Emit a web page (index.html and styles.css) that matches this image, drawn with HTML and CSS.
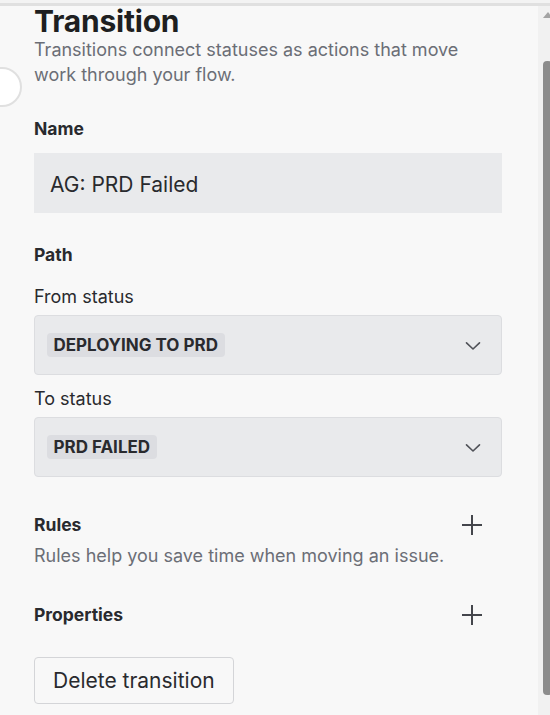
FILE: index.html
```html
<!DOCTYPE html>
<html lang="en">
<head>
<meta charset="utf-8">
<title>Transition</title>
<link rel="stylesheet" href="styles.css">
</head>
<body>
<div class="frame">
  <div class="topline"></div>
  <div class="row">
    <main class="panel">
      <h1 class="title">Transition</h1>
      <p class="subtitle">Transitions connect statuses as actions that move work through your flow.</p>

      <section class="field field-name">
        <h2 class="label">Name</h2>
        <div class="text-input">AG: PRD Failed</div>
      </section>

      <section class="field field-path">
        <h2 class="label">Path</h2>
        <div class="sublabel">From status</div>
        <div class="select">
          <span class="lozenge">DEPLOYING TO PRD</span>
          <svg class="chevron" width="16" height="10" viewBox="0 0 16 10"><path d="M1.5 1.8 L8 8 L14.5 1.8" fill="none" stroke="#505258" stroke-width="1.6" stroke-linecap="round" stroke-linejoin="round"/></svg>
        </div>
        <div class="sublabel sublabel-to">To status</div>
        <div class="select">
          <span class="lozenge">PRD FAILED</span>
          <svg class="chevron" width="16" height="10" viewBox="0 0 16 10"><path d="M1.5 1.8 L8 8 L14.5 1.8" fill="none" stroke="#505258" stroke-width="1.6" stroke-linecap="round" stroke-linejoin="round"/></svg>
        </div>
      </section>

      <section class="field field-rules">
        <div class="section-head">
          <h2 class="label">Rules</h2>
          <svg class="plus" width="22" height="22" viewBox="0 0 22 22"><path d="M11 1 V21 M1 11 H21" fill="none" stroke="#44464c" stroke-width="2"/></svg>
        </div>
        <p class="desc">Rules help you save time when moving an issue.</p>
      </section>

      <section class="field field-props">
        <div class="section-head">
          <h2 class="label">Properties</h2>
          <svg class="plus" width="22" height="22" viewBox="0 0 22 22"><path d="M11 1 V21 M1 11 H21" fill="none" stroke="#44464c" stroke-width="2"/></svg>
        </div>
      </section>

      <button class="btn-delete" type="button">Delete transition</button>
    </main>
    <div class="scrollbar">
      <div class="sb-arrow"></div>
      <div class="sb-thumb"></div>
    </div>
  </div>
  <div class="handle"></div>
</div>
</body>
</html>
```

FILE: styles.css
```css
* { box-sizing: border-box; }

html, body {
  margin: 0;
  padding: 0;
  width: 550px;
  height: 715px;
  overflow: hidden;
  background: #f8f8f8;
}

body {
  font-family: Inter, "Noto Sans", "Liberation Sans", sans-serif;
  color: #292a2e;
}

.frame {
  position: relative;
  width: 550px;
  height: 715px;
  overflow: hidden;
  background: #f3f3f3;
  padding-top: 3px;
}

.topline {
  height: 3px;
  background: #e0e0e0;
}

.row {
  display: flex;
  height: 709px;
  background: #f8f8f8;
}

.panel {
  width: 538px;
  flex: none;
  padding: 0 36px 0 34px;
}

.title {
  margin: 0;
  font-size: 30px;
  line-height: 30px;
  font-weight: 700;
  color: #1e1f21;
  letter-spacing: -0.2px;
}

.subtitle {
  margin: 2px 0 0;
  font-size: 18px;
  line-height: 24.5px;
  color: #6b6e76;
  width: 450px;
}

.label {
  margin: 0;
  font-size: 17.5px;
  line-height: 24px;
  font-weight: 700;
  color: #292a2e;
}

.field-name { margin-top: 30px; }

.text-input {
  margin-top: 12px;
  height: 60px;
  background: #e9eaec;
  display: flex;
  align-items: center;
  padding: 3px 16px 0;
  font-size: 21px;
  color: #292a2e;
}

.field-path { margin-top: 30px; }

.sublabel {
  margin-top: 18px;
  font-size: 18px;
  line-height: 24px;
}

.sublabel-to { margin-top: 12px; }

.select {
  margin-top: 6px;
  height: 60px;
  background: #e9eaec;
  border: 1px solid #dcdde0;
  border-radius: 4px;
  display: flex;
  align-items: center;
  justify-content: space-between;
  padding: 0 20px 0 12px;
}

.lozenge {
  display: inline-block;
  height: 24px;
  line-height: 24px;
  padding: 0 7px 0 6.5px;
  background: #dcdde1;
  border-radius: 4px;
  font-size: 17px;
  font-weight: 700;
  color: #292a2e;
}

.chevron { display: block; margin-top: 2px; }

.field-rules { margin-top: 36px; }

.section-head {
  display: flex;
  align-items: center;
  justify-content: space-between;
  padding-right: 19px;
}

.plus { display: block; }

.desc {
  margin: 7px 0 0;
  font-size: 18px;
  line-height: 24px;
  color: #6b6e76;
}

.field-props { margin-top: 35px; }

.btn-delete {
  margin-top: 30px;
  height: 47px;
  padding: 0 18px;
  background: #f8f8f8;
  border: 1px solid #d4d5d8;
  border-radius: 4px;
  font-family: inherit;
  font-size: 21px;
  color: #292a2e;
}

.scrollbar {
  width: 15px;
  flex: none;
  background: #f1f1f1;
}

.sb-arrow {
  margin: 6px 0 0 5px;
  width: 0;
  height: 0;
  border-left: 5px solid transparent;
  border-right: 5px solid transparent;
  border-bottom: 6px solid #a3a3a3;
}

.sb-thumb {
  margin: 43px 0 0 5px;
  width: 9px;
  height: 634px;
  background: #8c8c8c;
  border-radius: 4px;
}

.handle {
  position: absolute;
  left: -18px;
  top: 67px;
  width: 40px;
  height: 40px;
  border-radius: 50%;
  background: #ffffff;
  border: 2px solid #e0e0e0;
}
```
